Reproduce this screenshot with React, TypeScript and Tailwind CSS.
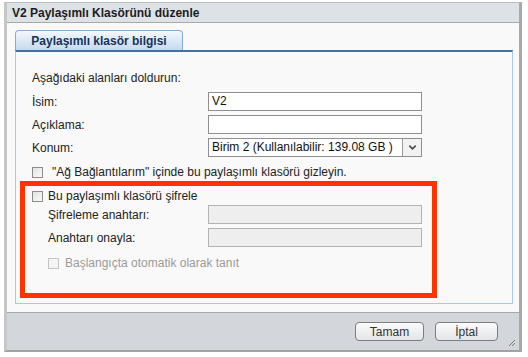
import { ChevronDown } from 'lucide-react';

const font = { fontFamily: "'Liberation Sans', Arial, sans-serif" };

function Checkbox({ disabled }: { disabled?: boolean }) {
  return (
    <span
      className={
        disabled
          ? 'block w-[11px] h-[11px] border border-[#c4c4c4] bg-[#f5f5f5]'
          : 'block w-[11px] h-[11px] border border-[#8c8c8c] bg-gradient-to-br from-[#e2e2e2] to-[#fbfbfb]'
      }
    />
  );
}

function Field({ label, value, disabled, indent }: { label: string; value?: string; disabled?: boolean; indent?: boolean }) {
  return (
    <div className="flex items-center h-[19px]">
      <div className={indent ? 'w-[183px] pl-[23px] text-[#222]' : 'w-[192px] pl-[16px] text-[#222]'}>{label}</div>
      <div
        className={
          disabled
            ? 'w-[214px] h-[19px] border border-[#b3b3b3] bg-[#eeeeee]'
            : 'w-[214px] h-[19px] border border-[#8f8f8f] bg-white px-[3px] leading-[17px] text-[#111]'
        }
      >
        {value}
      </div>
    </div>
  );
}

export default function App() {
  return (
    <div className="w-[528px] h-[357px] bg-white pt-[2px] pl-[4px] text-[12px]" style={font}>
      <div className="w-[518px] h-[350px] flex flex-col border-l-[3px] border-r-[3px] border-t border-b-2 border-l-[#c6c6c6] border-r-[#a9a9a9] border-t-[#bdbdbd] border-b-[#a3a3a3]">
        {/* Title */}
        <div className="h-[20px] bg-[#dde2e7] border-b border-[#a9a9a9] flex items-center pl-[5px] font-bold text-[12px] text-[#1c1c1c]">
          V2 Paylaşımlı Klasörünü düzenle
        </div>

        {/* Body */}
        <div className="flex-1 bg-[#f9f9f9] pt-[7px] pl-[8px] pr-[6px] pb-[8px] flex flex-col">
          <div className="flex items-end h-[20px]">
            <div className="w-[168px] h-[20px] rounded-t-[4px] border border-b-0 border-[#86abd0] bg-gradient-to-b from-[#f3f8fc] to-[#c6daee] flex items-center justify-center font-bold text-[#17335c]">
              Paylaşımlı klasör bilgisi
            </div>
            <div className="flex-1" />
          </div>
          <div className="flex-1 border-x border-b border-[#a9c8e4] border-t-2 border-t-[#44729f] flex flex-col">
            <div className="h-[18px]" />
            <div className="pl-[16px] h-[16px] leading-[16px] text-[#222]">Aşağıdaki alanları doldurun:</div>
            <div className="h-[6px]" />
            <div className="flex flex-col gap-[4px]">
              <Field label="İsim:" value="V2" />
              <Field label="Açıklama:" />
              <div className="flex items-center h-[19px]">
                <div className="w-[192px] pl-[16px] text-[#222]">Konum:</div>
                <div className="w-[214px] h-[19px] border border-[#8f8f8f] bg-white flex">
                  <div className="flex-1 px-[3px] leading-[17px] text-[#111]">Birim 2 (Kullanılabilir: 139.08 GB )</div>
                  <div className="w-[19px] border-l border-[#9a9a9a] bg-[#f2f2f2] flex items-center justify-center">
                    <ChevronDown size={11} strokeWidth={3.5} color="#4a4a4a" />
                  </div>
                </div>
              </div>
            </div>
            <div className="h-[8px]" />
            <div className="flex items-center h-[14px] pl-[16px] gap-[9px] text-[#222]">
              <Checkbox />
              <span>"Ağ Bağlantılarım" içinde bu paylaşımlı klasörü gizleyin.</span>
            </div>
            <div className="h-[2px]" />

            {/* Encryption section */}
            <div className="ml-[4px] w-[417px] h-[117px] border-[5px] border-[#ff3300] flex flex-col">
              <div className="h-[4px]" />
              <div className="flex items-center h-[12px] pl-[7px] gap-[5px] text-[#222]">
                <Checkbox />
                <span>Bu paylaşımlı klasörü şifrele</span>
              </div>
              <div className="h-[3px]" />
              <div className="flex flex-col gap-[4px]">
                <Field label="Şifreleme anahtarı:" disabled indent />
                <Field label="Anahtarı onayla:" disabled indent />
              </div>
              <div className="h-[10px]" />
              <div className="flex items-center h-[12px] pl-[23px] gap-[6px] text-[#9a9a9a]">
                <Checkbox disabled />
                <span>Başlangıçta otomatik olarak tanıt</span>
              </div>
            </div>
          </div>
        </div>

        {/* Footer */}
        <div className="h-[38px] bg-[#d3d7db] border-t border-[#a8a8a8] flex items-center justify-end pr-[21px] gap-[11px] relative">
          <button className="w-[69px] h-[19px] rounded-[4px] border border-[#7d7d7d] bg-gradient-to-b from-[#fbfbfb] to-[#e3e5e7] text-[#333] text-[12px]">
            Tamam
          </button>
          <button className="w-[63px] h-[19px] rounded-[4px] border border-[#7d7d7d] bg-gradient-to-b from-[#fbfbfb] to-[#e3e5e7] text-[#333] text-[12px]">
            İptal
          </button>
          <svg className="absolute right-[3px] bottom-[3px]" width="8" height="8" viewBox="0 0 8 8">
            <path d="M1 7 L7 1 M4 7 L7 4" stroke="#7a7a7a" strokeWidth="1" />
          </svg>
        </div>
      </div>
    </div>
  );
}
